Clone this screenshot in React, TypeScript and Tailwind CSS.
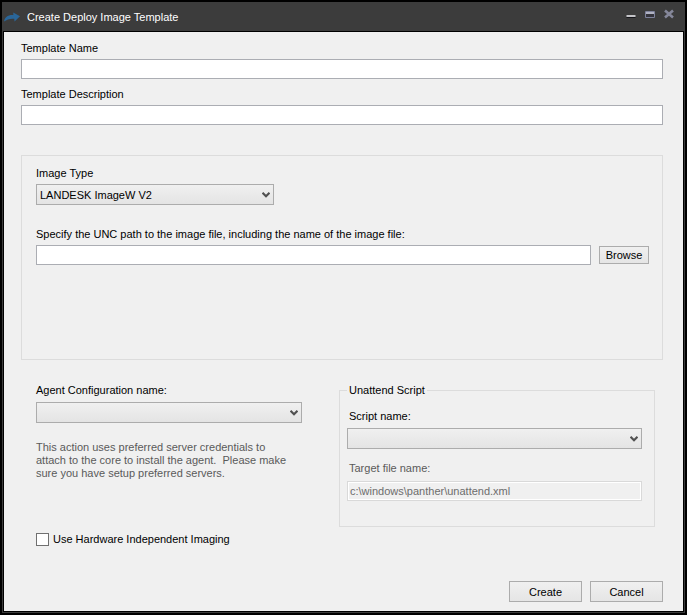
import { useState } from "react";
import type { ReactNode } from "react";

interface TextFieldProps {
    id: string;
    value: string;
    onChange: (value: string) => void;
}

function TextField({ id, value, onChange }: TextFieldProps) {
    return (
        <input
            id={id}
            type="text"
            value={value}
            onChange={(e) => onChange(e.target.value)}
            className="block h-5 w-full min-w-0 rounded-none border border-[#abadb3] bg-white px-1 outline-none focus:border-[#569de5]"
        />
    );
}

interface DropDownProps {
    id: string;
    options: string[];
}

function DropDown({ id, options }: DropDownProps) {
    return (
        <div className="relative">
            <select
                id={id}
                className="block h-[21px] w-full appearance-none rounded-none border border-[#acacac] bg-linear-to-b from-[#f0f0f0] to-[#e4e4e4] pr-5 pl-[3px] outline-none"
            >
                {options.map((option) => (
                    <option key={option}>{option}</option>
                ))}
            </select>
            <svg
                viewBox="0 0 8 6"
                className="pointer-events-none absolute top-2 right-1 h-[6px] w-2"
                aria-hidden="true"
            >
                <path d="M0.5 0.8 L4 4.3 L7.5 0.8" fill="none" stroke="#505050" strokeWidth="2.2" />
            </svg>
        </div>
    );
}

interface PushButtonProps {
    className: string;
    children: ReactNode;
}

function PushButton({ className, children }: PushButtonProps) {
    return (
        <button
            type="button"
            className={`flex items-center justify-center border border-[#acacac] bg-linear-to-b from-[#f0f0f0] to-[#e5e5e5] hover:border-[#7eb4ea] ${className}`}
        >
            {children}
        </button>
    );
}

function TitleBar() {
    return (
        <header className="flex h-[28px] items-center bg-[#3c3c3c] pr-[10px] pb-px pl-px text-white">
            <svg viewBox="0 0 16 10" className="h-[10px] w-4" aria-hidden="true">
                <path d="M0 9.6 C0.6 5 4 2.6 9.4 3 L9.2 0.4 L16 4.2 L10.6 9.4 L10.2 6.8 C6 6.4 3 7.4 0 9.6 Z" fill="#2a6699" />
            </svg>
            <h1 className="ml-[7px] flex-1">Create Deploy Image Template</h1>
            <div className="flex items-center gap-[9px] pb-[6px]">
                <button type="button" aria-label="Minimize">
                    <svg viewBox="0 0 10 10" className="block size-[10px]">
                        <path d="M0.5 7 H9.5" stroke="#c4c4c8" strokeWidth="2" />
                        <path d="M0.5 8.5 H9.5" stroke="#15151a" />
                    </svg>
                </button>
                <button type="button" aria-label="Maximize">
                    <svg viewBox="0 0 10 10" className="block size-[10px]">
                        <path d="M0.5 2.5 H9.5 V8.5 H0.5 Z" fill="#34343c" stroke="#7d819b" />
                        <path d="M1 4 H9" stroke="#b0b2c2" strokeWidth="2" />
                    </svg>
                </button>
                <button type="button" aria-label="Close">
                    <svg viewBox="0 0 10 10" className="block size-[10px]">
                        <path d="M1 1.5 L9 8.5 M9 1.5 L1 8.5" stroke="#85879a" strokeWidth="2.6" />
                    </svg>
                </button>
            </div>
        </header>
    );
}

export default function App() {
    const [name, setName] = useState("");
    const [description, setDescription] = useState("");
    const [imagePath, setImagePath] = useState("");
    const [independent, setIndependent] = useState(false);

    return (
        <div className="flex min-h-screen flex-col border-2 border-black bg-[#3c3c3c] p-px font-['Liberation_Sans',Arial,sans-serif] text-[11px] leading-4 text-black">
            <TitleBar />
            <main className="flex flex-1 flex-col border border-black bg-[#f0f0f0] pt-2 pr-5 pb-[9px] pl-[17px]">
                <div className="space-y-[7px]">
                    <div>
                        <label htmlFor="template-name" className="mb-[3px] block">Template Name</label>
                        <TextField id="template-name" value={name} onChange={setName} />
                    </div>
                    <div>
                        <label htmlFor="template-description" className="mb-[3px] block">Template Description</label>
                        <TextField id="template-description" value={description} onChange={setDescription} />
                    </div>
                </div>

                {/* Image settings */}
                <section className="mt-[30px] min-h-[205px] border border-[#dcdcdc] pt-[9px] pr-[13px] pl-[14px]">
                    <label htmlFor="image-type" className="mb-[3px] block">Image Type</label>
                    <div className="w-[238px]">
                        <DropDown id="image-type" options={["LANDESK ImageW V2"]} />
                    </div>
                    <label htmlFor="image-path" className="mt-[21px] mb-[3px] block">
                        Specify the UNC path to the image file, including the name of the image file:
                    </label>
                    <div className="flex items-center gap-2">
                        <TextField id="image-path" value={imagePath} onChange={setImagePath} />
                        <PushButton className="h-[18px] w-[50px] shrink-0">Browse</PushButton>
                    </div>
                </section>

                {/* Agent and unattend script */}
                <div className="mt-[22px] grid grid-cols-[266fr_316fr] gap-[37px] pr-2 pl-[15px]">
                    <div className="min-w-0">
                        <label htmlFor="agent-config" className="mb-1 block">Agent Configuration name:</label>
                        <DropDown id="agent-config" options={[""]} />
                        <p className="mt-[18px] leading-[13px] text-[#5a5a5a]">
                            This action uses preferred server credentials to
                            <br />
                            attach to the core to install the agent.&nbsp; Please make
                            <br />
                            sure you have setup preferred servers.
                        </p>
                    </div>
                    <fieldset className="min-w-0 border border-[#dcdcdc] pr-3 pb-[25px] pl-[7px]">
                        <legend className="px-[2px]">Unattend Script</legend>
                        <label htmlFor="script-name" className="mt-[10px] mb-1 block pl-[2px]">Script name:</label>
                        <DropDown id="script-name" options={[""]} />
                        <label htmlFor="target-file" className="mt-[11px] mb-[5px] block pl-[2px] text-[#5a5a5a]">
                            Target file name:
                        </label>
                        <input
                            id="target-file"
                            type="text"
                            disabled
                            value="c:\windows\panther\unattend.xml"
                            className="block h-5 w-full border border-[#d9d9d9] bg-[#f0f0f0] px-[2px] text-[#6d6d6d] inset-ring inset-ring-white"
                        />
                    </fieldset>
                </div>

                <label className="mt-1 ml-[15px] flex items-center gap-1 self-start">
                    <input
                        type="checkbox"
                        checked={independent}
                        onChange={(e) => setIndependent(e.target.checked)}
                        className="size-[13px] appearance-none border border-[#707070] bg-white checked:bg-[#707070]"
                    />
                    Use Hardware Independent Imaging
                </label>

                <footer className="mt-auto flex justify-end gap-2">
                    <PushButton className="h-[21px] w-[73px]">Create</PushButton>
                    <PushButton className="h-[21px] w-[73px]">Cancel</PushButton>
                </footer>
            </main>
        </div>
    );
}
